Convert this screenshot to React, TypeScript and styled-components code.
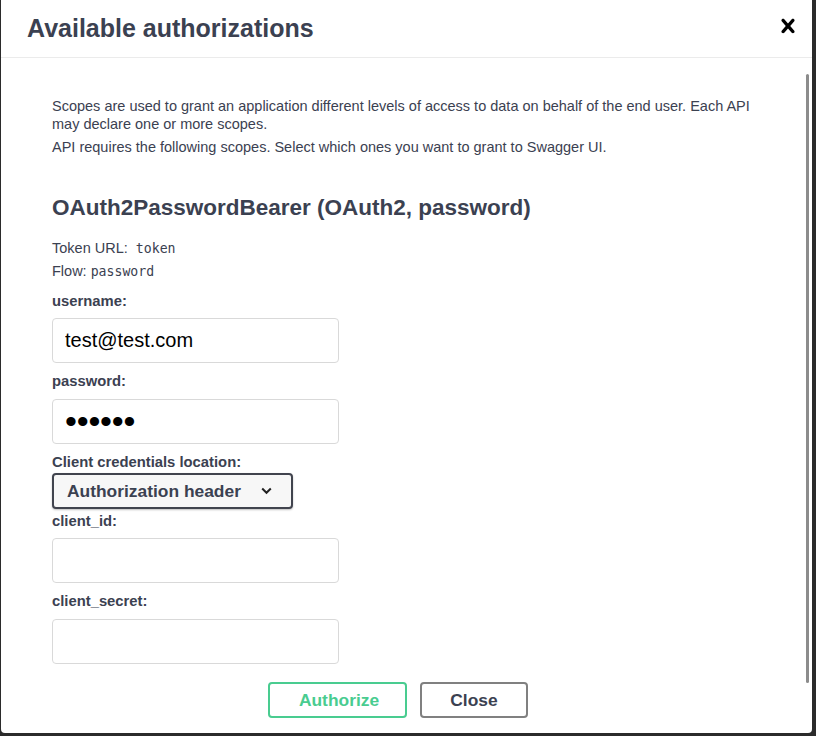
import React from "react";
import styled, { createGlobalStyle } from "styled-components";

const Global = createGlobalStyle`
  html, body { margin: 0; padding: 0; background: #2b2b2b; overflow: hidden; }
  body { font-family: "Liberation Sans", Arial, sans-serif; }
  * { box-sizing: border-box; }
`;

const Backdrop = styled.div`
  width: 816px;
  height: 736px;
  padding-left: 1px;
  display: flex;
  align-items: flex-start;
`;

const Modal = styled.div`
  width: 811px;
  height: 733px;
  background: #fff;
  border-radius: 0 0 4px 4px;
  display: flex;
  flex-direction: column;
  overflow: hidden;
`;

const Header = styled.div`
  height: 58px;
  flex-shrink: 0;
  border-bottom: 1px solid #ebebeb;
  display: flex;
  align-items: center;
  justify-content: space-between;
  padding: 0 10px 0 26px;
`;

const Title = styled.h3`
  margin: 0;
  font-size: 25px;
  font-weight: 700;
  color: #3b4151;
`;

const CloseX = styled.button`
  background: none;
  border: 0;
  padding: 0;
  width: 28px;
  height: 28px;
  display: flex;
  margin-top: -5px;
  cursor: pointer;
`;

const Content = styled.div`
  position: relative;
  flex: 1;
  overflow: hidden;
  padding: 40px 0 0 51px;
`;

const Thumb = styled.div`
  position: absolute;
  top: 16px;
  right: 3px;
  width: 3px;
  height: 609px;
  border-radius: 2px;
  background: #8c8c8c;
`;

const Para = styled.p`
  margin: 0 0 5.8px;
  max-width: 715px;
  font-size: 14.5px;
  line-height: 17.6px;
  color: #3b4151;
`;

const Scheme = styled.h4`
  margin: 38px 0 19px;
  font-size: 22.5px;
  line-height: 26px;
  font-weight: 700;
  color: #3b4151;
`;

const Code = styled.code`
  font-family: "DejaVu Sans Mono", "Liberation Mono", monospace;
  font-size: 13.2px;
  color: #3b4151;
`;

const Form = styled.div`
  margin-top: 12px;
  display: flex;
  flex-direction: column;
  align-items: flex-start;
`;

const Label = styled.label<{ $tight?: boolean }>`
  display: block;
  font-size: 14.8px;
  line-height: 17.6px;
  font-weight: 700;
  color: #3b4151;
  margin-bottom: ${(p) => (p.$tight ? "2px" : "8px")};
`;

const Input = styled.input`
  width: 287px;
  height: 45px;
  margin: 0 0 10px;
  padding: 0 12px;
  border: 1px solid #d9d9d9;
  border-radius: 4px;
  background: #fff;
  font-family: "Liberation Sans", Arial, sans-serif;
  font-size: 20px;
  color: #000;
  outline: none;

  &[type="password"] {
    font-size: 34px;
    letter-spacing: -0.2px;
    padding-left: 12px;
  }
`;

const SelectWrap = styled.div`
  position: relative;
  width: 241px;
  height: 36px;
  margin-bottom: 3.5px;
`;

const Select = styled.select`
  appearance: none;
  width: 100%;
  height: 100%;
  padding: 0 0 0 13px;
  border: 2px solid #41444e;
  border-radius: 4px;
  background: #f7f7f7;
  box-shadow: 0 1px 2px 0 rgba(0, 0, 0, 0.25);
  font-family: "Liberation Sans", Arial, sans-serif;
  font-size: 17.4px;
  font-weight: 700;
  color: #3b4151;
  outline: none;
`;

const Chevron = styled.svg`
  position: absolute;
  right: 21px;
  top: 14px;
  pointer-events: none;
`;

const ButtonRow = styled.div`
  width: 692px;
  margin-top: 8px;
  display: flex;
  justify-content: center;
  gap: 13px;
`;

const Btn = styled.button<{ $variant: "authorize" | "close" }>`
  height: 36px;
  width: ${(p) => (p.$variant === "authorize" ? "139px" : "108px")};
  padding: 0;
  padding-left: ${(p) => (p.$variant === "authorize" ? "3px" : "0")};
  border-radius: 4px;
  background: transparent;
  border: 2px solid ${(p) => (p.$variant === "authorize" ? "#49cc90" : "#808080")};
  color: ${(p) => (p.$variant === "authorize" ? "#49cc90" : "#3b4151")};
  font-family: "Liberation Sans", Arial, sans-serif;
  font-size: 17.4px;
  font-weight: 700;
  cursor: pointer;
`;

export default function App() {
  return (
    <>
      <Global />
      <Backdrop>
        <Modal>
          <Header>
            <Title>Available authorizations</Title>
            <CloseX aria-label="Close">
              <svg width="28" height="28" viewBox="0 0 20 20">
                <path
                  fill="#000"
                  d="M14.348 14.849c-.469.469-1.229.469-1.697 0L10 11.819l-2.651 3.029c-.469.469-1.229.469-1.697 0-.469-.469-.469-1.229 0-1.697l2.758-3.15-2.759-3.152c-.469-.469-.469-1.228 0-1.697.469-.469 1.228-.469 1.697 0L10 8.183l2.651-3.031c.469-.469 1.228-.469 1.697 0 .469.469.469 1.229 0 1.697l-2.758 3.152 2.758 3.15c.469.469.469 1.229 0 1.698z"
                />
              </svg>
            </CloseX>
          </Header>
          <Content>
            <Para>
              Scopes are used to grant an application different levels of access to data on behalf of the end
              user. Each API may declare one or more scopes.
            </Para>
            <Para>API requires the following scopes. Select which ones you want to grant to Swagger UI.</Para>
            <Scheme>OAuth2PasswordBearer (OAuth2, password)</Scheme>
            <Para>
              Token URL:&nbsp; <Code>token</Code>
            </Para>
            <Para>
              Flow: <Code>password</Code>
            </Para>
            <Form>
              <Label htmlFor="oauth_username">username:</Label>
              <Input id="oauth_username" type="text" defaultValue="test@test.com" />
              <Label htmlFor="oauth_password">password:</Label>
              <Input id="oauth_password" type="password" defaultValue="secret" />
              <Label htmlFor="client_type" $tight>
                Client credentials location:
              </Label>
              <SelectWrap>
                <Select id="client_type" defaultValue="header">
                  <option value="header">Authorization header</option>
                  <option value="request-body">Request body</option>
                </Select>
                <Chevron width="11" height="8" viewBox="0 0 11 8">
                  <polyline points="1.2,1.5 5.5,5.8 9.8,1.5" fill="none" stroke="#222" strokeWidth="2" />
                </Chevron>
              </SelectWrap>
              <Label htmlFor="client_id">client_id:</Label>
              <Input id="client_id" type="text" />
              <Label htmlFor="client_secret">client_secret:</Label>
              <Input id="client_secret" type="password" />
              <ButtonRow>
                <Btn $variant="authorize">Authorize</Btn>
                <Btn $variant="close">Close</Btn>
              </ButtonRow>
            </Form>
            <Thumb />
          </Content>
        </Modal>
      </Backdrop>
    </>
  );
}
